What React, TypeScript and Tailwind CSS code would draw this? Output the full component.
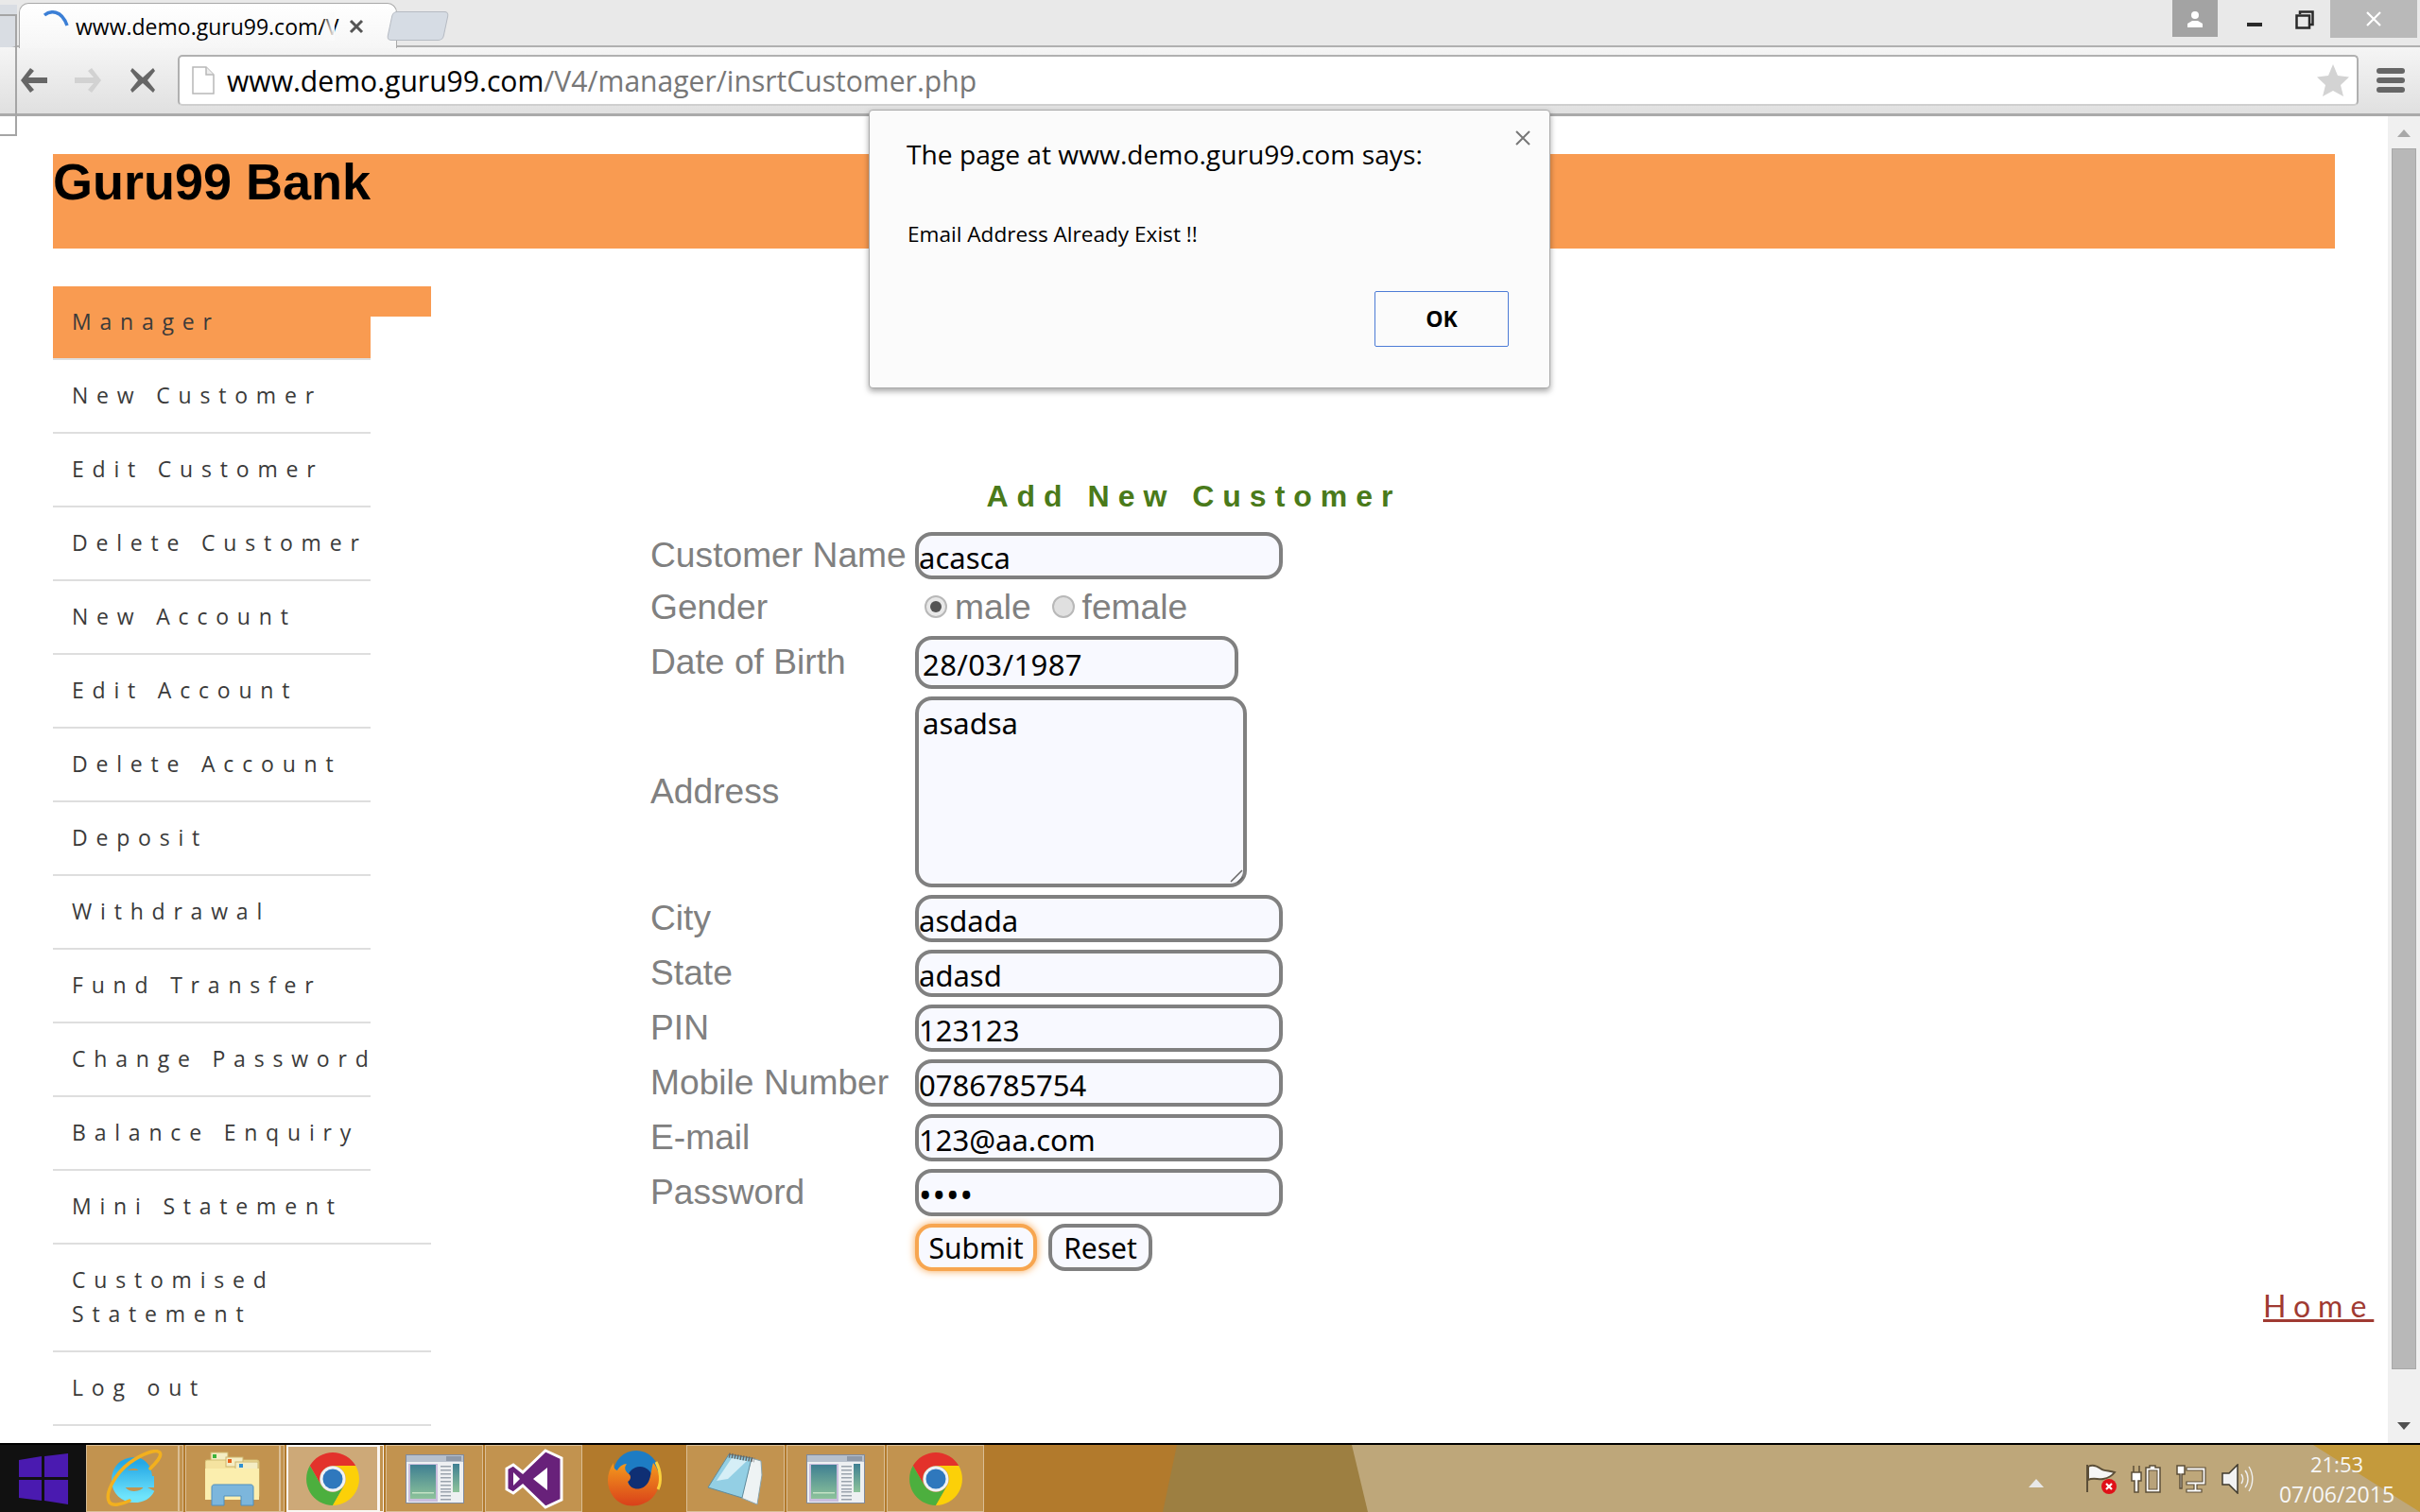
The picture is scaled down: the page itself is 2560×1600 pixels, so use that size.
import { ReactNode } from "react";

const menuItems = [
  "New Customer",
  "Edit Customer",
  "Delete Customer",
  "New Account",
  "Edit Account",
  "Delete Account",
  "Deposit",
  "Withdrawal",
  "Fund Transfer",
  "Change Password",
  "Balance Enquiry",
  "Mini Statement",
];

const inputClass =
  "block h-full w-[389px] rounded-[18px] border-4 border-[#808080] bg-[#f8f9ff] pt-[4px] font-['Noto_Sans',sans-serif] text-[31px] leading-[40px] text-black outline-none";

function Row({ label, height, children }: { label?: string; height: string; children: ReactNode }) {
  return (
    <div className={`flex items-center ${height}`}>
      <div className="mb-[2px] w-[280px] shrink-0 text-[37.2px] leading-[44px] text-[#808080]">{label}</div>
      {children}
    </div>
  );
}

function ChromeIcon() {
  return (
    <svg width="60" height="60" viewBox="0 0 60 60">
      <path d="M5.8 16A28 28 0 0 1 54.2 16L30 16A14 14 0 0 0 17.9 37Z" fill="#e3322b" />
      <path d="M5.8 16L17.9 37A14 14 0 0 0 42.1 37L30 58A28 28 0 0 1 5.8 16Z" fill="#4caf3e" />
      <path d="M54.2 16A28 28 0 0 1 30 58L42.1 37A14 14 0 0 0 30 16Z" fill="#fcd008" />
      <circle cx="30" cy="30" r="13.5" fill="#eef2f6" />
      <circle cx="30" cy="30" r="10.5" fill="#2f78bd" />
    </svg>
  );
}

function AppWindowIcon() {
  return (
    <svg width="62" height="52" viewBox="0 0 62 52">
      <defs>
        <linearGradient id="panel" x1="0" y1="0" x2="0" y2="1">
          <stop offset="0" stopColor="#3f7f92" />
          <stop offset="1" stopColor="#8dc39a" />
        </linearGradient>
      </defs>
      <rect x="0.5" y="0.5" width="61" height="51" fill="#eef0f2" stroke="#7f8a9c" />
      <rect x="1" y="1" width="60" height="7" fill="#b7c0cc" />
      <rect x="43" y="2" width="16" height="5" fill="#8f99a8" />
      <rect x="3" y="10" width="31" height="40" fill="#c9bedd" />
      <rect x="5" y="11" width="27" height="36" fill="url(#panel)" />
      <rect x="7" y="40" width="23" height="1.5" fill="#c5e3c5" />
      {[12, 16, 20, 24, 28, 32, 36, 39, 43, 47].map((y) => (
        <rect key={y} x="37" y={y} width="11" height="1.5" fill="#9aa3ad" />
      ))}
      <rect x="50" y="10" width="7" height="30" fill="url(#panel)" />
    </svg>
  );
}

function IeIcon() {
  return (
    <svg width="66" height="62" viewBox="0 0 66 62">
      <defs>
        <linearGradient id="ie" x1="0" y1="0" x2="0" y2="1">
          <stop offset="0" stopColor="#25a8e6" />
          <stop offset="1" stopColor="#6fe4fb" />
        </linearGradient>
      </defs>
      <path d="M56 34H20M20 28H48C47 18 41 14 35 14C25 14 17 21 17 32C17 43 25 50 35 50C42 50 48 47 51 41" fill="none" stroke="url(#ie)" strokeWidth="12" />
      <path d="M9 56C3 48 14 26 30 14C44 4 58 -1 62 3C65 7 58 14 52 20" fill="none" stroke="#f2b01e" strokeWidth="3.5" strokeLinecap="round" />
      <path d="M9 56C12 60 22 58 30 54" fill="none" stroke="#f2b01e" strokeWidth="3.5" strokeLinecap="round" />
    </svg>
  );
}

function FolderIcon() {
  return (
    <svg width="58" height="58" viewBox="0 0 58 58">
      <rect x="6" y="1" width="18" height="10" fill="#f4edc4" stroke="#cdb56d" />
      <rect x="8" y="3" width="4" height="4" fill="#3bb33b" />
      <rect x="0" y="9" width="57" height="40" rx="2" fill="#f5e3a0" stroke="#d2bd74" />
      <rect x="22" y="6" width="18" height="10" fill="#f4edc4" stroke="#cdb56d" />
      <rect x="24" y="8" width="4" height="4" fill="#e8621d" />
      <rect x="32" y="11" width="24" height="10" fill="#f4edc4" stroke="#cdb56d" />
      <rect x="36" y="13" width="4" height="4" fill="#2f8fd1" />
      <rect x="0" y="18" width="57" height="33" fill="#fbeeae" />
      <path d="M7 57V38C7 36 8 35 10 35H48C50 35 51 36 51 38V57H38V47H20V57Z" fill="#7cb6dc" stroke="#4e8fbe" />
    </svg>
  );
}

function VsIcon() {
  return (
    <svg width="62" height="64" viewBox="0 0 62 64">
      <path d="M43 2L60 10V54L43 62L19 39L9 47L2 43V21L9 17L19 25Z" fill="#68217a" stroke="#fff" strokeWidth="3" />
      <path d="M9 25V39L16 32Z" fill="#fff" />
      <path d="M30 32L45 20V44Z" fill="#fff" />
    </svg>
  );
}

function FirefoxIcon() {
  return (
    <svg width="60" height="62" viewBox="0 0 60 62">
      <defs>
        <linearGradient id="ffo" x1="0" y1="0" x2="0" y2="1">
          <stop offset="0" stopColor="#f39a1d" />
          <stop offset="1" stopColor="#d9401a" />
        </linearGradient>
      </defs>
      <circle cx="32" cy="25" r="24" fill="#1d7cc4" />
      <circle cx="36" cy="31" r="13" fill="#0f2f74" />
      <path d="M50 14C60 26 58 42 49 51C38 62 18 63 8 50C-1 38 1 24 8 14C8 19 9 21 12 22C14 18 18 15 22 15C19 19 20 22 23 25C27 27 27 31 23 34C26 44 40 44 45 34C48 28 48 20 50 14Z" fill="url(#ffo)" />
      <path d="M53 13C58 22 59 34 55 42" fill="none" stroke="#fbd13b" strokeWidth="3" />
    </svg>
  );
}

function NotepadIcon() {
  return (
    <svg width="60" height="56" viewBox="0 0 60 56">
      <path d="M47 6L57 9L58 24L53 55L36 48Z" fill="#eef3f4" stroke="#8aa5ae" />
      <path d="M23 2L47 6L37 48L1 37Z" fill="#93cfe4" stroke="#5f8b9c" />
      <path d="M26 6L42 9L22 28L10 30Z" fill="#d5eef6" />
      <path d="M23 3L50 8" stroke="#666" strokeWidth="5" strokeDasharray="1.5 1.5" />
    </svg>
  );
}

function TaskButton({ children, width, active, stacked }: { children: ReactNode; width: string; active?: boolean; stacked?: boolean }) {
  return (
    <div className={`flex h-[71px] shrink-0 ${width}`}>
      <div
        className={`flex h-full flex-1 items-center justify-center border ${
          active ? "border-2 border-white/90 bg-[#cda978]" : "border-white/40 bg-[#c2934f]"
        }`}
      >
        {children}
      </div>
      {stacked && <div className={`h-full w-[5px] border ${active ? "border-white/90" : "border-white/40"} bg-[#c2934f]`} />}
    </div>
  );
}

export default function App() {
  return (
    <div className="relative flex h-[1600px] w-[2560px] flex-col overflow-hidden bg-white font-['Liberation_Sans',sans-serif]">
      {/* Browser chrome */}
      <div className="relative h-[50px] shrink-0 border-b-2 border-[#b0b0b0] bg-[#e9e9e9]">
        <div className="absolute left-0 top-[5px] h-[45px] w-[18px] rounded-br-md bg-[#d9dde3]" />
        <div className="absolute left-[20px] top-[3px] flex h-[48px] w-[400px] items-center rounded-t-[10px] border border-b-0 border-[#a9a9a9] bg-gradient-to-b from-white to-[#f6f6f6] pl-[24px]">
          <svg width="28" height="18" viewBox="0 0 28 18" className="mb-[16px] shrink-0">
            <path d="M2 5C8 0 20 -1 26 16" fill="none" stroke="#3b7fd6" strokeWidth="3.5" />
          </svg>
          <span className="relative ml-[7px] w-[274px] whitespace-nowrap font-['Open_Sans',sans-serif] text-[23px] leading-[30px] text-black">
            www.demo.guru99.com/V
            <span className="absolute right-0 top-0 h-full w-[14px] bg-gradient-to-r from-transparent to-[#fbfbfb]" />
          </span>
          <svg width="16" height="16" viewBox="0 0 16 16" className="ml-[15px]">
            <path d="M2 2L14 14M14 2L2 14" stroke="#555" strokeWidth="3" />
          </svg>
        </div>
        <div className="absolute left-[412px] top-[12px] h-[31px] w-[60px] -skew-x-12 rounded-[5px] border border-[#b5bac2] bg-[#d6dce4]" />
        <div className="absolute right-[214px] top-0 flex h-[39px] w-[48px] items-center justify-center bg-[#a3a3a3]">
          <svg width="18" height="20" viewBox="0 0 18 20">
            <circle cx="9" cy="6" r="4" fill="#fff" />
            <path d="M1 19V15L6 12H12L17 15V19Z" fill="#fff" />
          </svg>
        </div>
        <div className="absolute left-[2377px] top-[24px] h-[4px] w-[16px] bg-[#2a2a2a]" />
        <svg width="20" height="20" viewBox="0 0 20 20" className="absolute left-[2428px] top-[11px]">
          <path d="M5 4V1.5H18.5V15H15M1.5 5.5H15V18.5H1.5Z" fill="none" stroke="#2a2a2a" strokeWidth="2.5" />
        </svg>
        <div className="absolute left-[2465px] top-0 flex h-[40px] w-[92px] items-center justify-center bg-[#b9b9b9]">
          <svg width="16" height="16" viewBox="0 0 16 16">
            <path d="M1 1L15 15M15 1L1 15" stroke="#fff" strokeWidth="2.2" />
          </svg>
        </div>
      </div>
      <div className="flex h-[73px] shrink-0 items-center border-b-[3px] border-[#aaaaaa] bg-gradient-to-b from-[#f5f5f5] to-[#e0e0e0]">
        <svg width="34" height="30" viewBox="0 0 34 30" className="ml-[19px] shrink-0">
          <path d="M13 2L3 15L13 28L17 25L11 18H31V12H11L17 5Z" fill="#666" />
        </svg>
        <svg width="34" height="30" viewBox="0 0 34 30" className="ml-[23px] shrink-0">
          <path d="M21 2L31 15L21 28L17 25L23 18H3V12H23L17 5Z" fill="#d2d2d2" />
        </svg>
        <svg width="30" height="30" viewBox="0 0 30 30" className="ml-[26px] shrink-0">
          <path d="M4 2L15 12L26 2L28 5L20 15L28 25L26 28L15 18L4 28L2 25L10 15L2 5Z" fill="#666" />
        </svg>
        <div className="ml-[22px] flex h-[54px] w-[2307px] items-center rounded-[5px] border-2 border-[#b0b0b0] border-b-[#cfcfcf] bg-white pl-[13px]">
          <svg width="24" height="30" viewBox="0 0 24 30" className="shrink-0">
            <path d="M1 1H15L23 9V29H1Z" fill="#fff" stroke="#b8b8b8" strokeWidth="1.5" />
            <path d="M15 1V9H23" fill="#eee" stroke="#b8b8b8" strokeWidth="1.5" />
          </svg>
          <span className="ml-[13px] mt-[2px] whitespace-nowrap font-['Open_Sans',sans-serif] text-[30.1px] leading-[40px] text-[#777]">
            <span className="text-black">www.demo.guru99.com</span>/V4/manager/insrtCustomer.php
          </span>
          <svg width="36" height="36" viewBox="0 0 36 36" className="ml-auto mr-[7px] shrink-0">
            <path d="M18 1L23 13L35 14.5L26 23L29 35L18 29L7 35L10 23L1 14.5L13 13Z" fill="#d3d3d3" />
          </svg>
        </div>
        <div className="ml-[19px] flex w-[30px] flex-col gap-[4px]">
          <div className="h-[6px] rounded-[3px] bg-[#666]" />
          <div className="h-[6px] rounded-[3px] bg-[#666]" />
          <div className="h-[6px] rounded-[3px] bg-[#666]" />
        </div>
      </div>
      <div className="absolute left-0 top-[15px] h-[129px] w-[18px] border-y-2 border-r-2 border-[#a5a5a5]" />

      {/* Page */}
      <div className="flex min-h-0 flex-1">
        <div className="min-w-0 flex-1 pl-[56px] pt-[40px]">
          <div className="h-[100px] w-[2414px] bg-[#f99b51]">
            <h1 className="text-[54px] font-bold leading-[58px] text-black">Guru99 Bank</h1>
          </div>
          <div className="mt-[40px] flex">
            <ul className="w-[400px] shrink-0 font-['Open_Sans',sans-serif] text-[23px] leading-[36px] tracking-[8.8px] text-[#3a3a3a]">
              <li className="flex items-start">
                <div className="flex h-[76px] w-[336px] items-center bg-[#f99b51] pb-[2px] pl-[20px]">Manager</div>
                <div className="h-[32px] w-[64px] bg-[#f99b51]" />
              </li>
              {menuItems.map((item) => (
                <li key={item} className="flex h-[78px] w-[336px] items-center whitespace-nowrap border-t-2 border-[#dedede] pb-[2px] pl-[20px]">
                  {item}
                </li>
              ))}
              <li className="w-[400px] border-y-2 border-[#dedede] pb-[21px] pl-[20px] pt-[19px]">
                Customised
                <br />
                Statement
              </li>
              <li className="flex h-[78px] w-[400px] items-center border-b-2 border-[#dedede] pb-[2px] pl-[20px]">Log out</li>
            </ul>
            <div className="ml-[232px] w-[1144px] shrink-0 pt-[200px]">
              <h2 className="pl-[6px] text-center text-[32px] font-bold leading-[44px] tracking-[9px] text-[#4a7a1a]">Add New Customer</h2>
              <div className="mt-[16px] flex flex-col gap-2">
                <Row label="Customer Name" height="h-[50px]">
                  <input readOnly value="acasca" className={inputClass} />
                </Row>
                <Row label="Gender" height="h-[44px]">
                  <div className="mb-[2px] flex items-center pl-[10px] text-[37.2px] leading-[44px] text-[#808080]">
                    <span className="flex h-[24px] w-[24px] items-center justify-center rounded-full border-2 border-[#b8b8b8] bg-[#e8e8e8]">
                      <span className="h-[12px] w-[12px] rounded-full bg-[#555]" />
                    </span>
                    <span className="ml-[8px]">male</span>
                    <span className="ml-[22px] h-[24px] w-[24px] rounded-full border-2 border-[#b8b8b8] bg-[#e0e0e0]" />
                    <span className="ml-[8px]">female</span>
                  </div>
                </Row>
                <Row label="Date of Birth" height="h-[56px]">
                  <input readOnly value="28/03/1987" className={`${inputClass} !w-[342px] pl-[4px] tracking-[0.4px]`} />
                </Row>
                <Row label="Address" height="h-[202px]">
                  <div className="relative h-full w-[351px]">
                    <textarea readOnly value="asadsa" className="block h-full w-full resize-none rounded-[18px] border-4 border-[#808080] bg-[#f8f9ff] pl-[4px] pt-[4px] font-['Noto_Sans',sans-serif] text-[31px] leading-[40px] text-black outline-none" />
                    <svg width="16" height="16" viewBox="0 0 16 16" className="absolute bottom-[4px] right-[3px]">
                      <path d="M2 14L14 2M9 15L15 9" stroke="#666" strokeWidth="1.5" />
                    </svg>
                  </div>
                </Row>
                <Row label="City" height="h-[50px]">
                  <input readOnly value="asdada" className={inputClass} />
                </Row>
                <Row label="State" height="h-[50px]">
                  <input readOnly value="adasd" className={inputClass} />
                </Row>
                <Row label="PIN" height="h-[50px]">
                  <input readOnly value="123123" className={inputClass} />
                </Row>
                <Row label="Mobile Number" height="h-[50px]">
                  <input readOnly value="0786785754" className={inputClass} />
                </Row>
                <Row label="E-mail" height="h-[50px]">
                  <input readOnly value="123@aa.com" className={inputClass} />
                </Row>
                <Row label="Password" height="h-[50px]">
                  <input readOnly type="password" value="abcd" className={`${inputClass} !text-[36px] tracking-[1px]`} />
                </Row>
                <Row height="h-[50px]">
                  <div className="flex h-full gap-[12px] font-['Noto_Sans',sans-serif] text-[30px] text-black">
                    <button className="h-full w-[129px] rounded-[18px] border-4 border-[#f7a650] bg-[#f8f9ff] pt-[2px] leading-[38px] shadow-[0_0_8px_#f7a650]">Submit</button>
                    <button className="h-full w-[110px] rounded-[18px] border-4 border-[#808080] bg-[#f8f9ff] pt-[2px] leading-[38px]">Reset</button>
                  </div>
                </Row>
              </div>
            </div>
            <a className="ml-[562px] mt-[1059px] h-[40px] self-start whitespace-nowrap font-['Lato',sans-serif] text-[32px] leading-[40px] tracking-[0.25em] text-[#a03a32] underline">
              Home
            </a>
          </div>
        </div>

        {/* Scrollbar */}
        <div className="flex w-[34px] shrink-0 flex-col items-center bg-[#f0f0f0] pt-[14px]">
          <div className="h-0 w-0 border-x-[7px] border-b-[8px] border-x-transparent border-b-[#a8a8a8]" />
          <div className="mt-[12px] h-[1292px] w-[26px] border border-[#a8a8a8] bg-[#b8b8b8]" />
          <div className="mt-[56px] h-0 w-0 border-x-[7px] border-t-[8px] border-x-transparent border-t-[#505050]" />
        </div>
      </div>

      {/* Taskbar */}
      <div className="relative flex h-[73px] shrink-0 items-center border-t-2 border-black bg-[#bea77a]">
        {/* wallpaper showing through the taskbar */}
        <div className="absolute inset-y-0 left-0 w-[1447px] bg-[#9d7f41] [clip-path:polygon(0_0,1430px_0,100%_100%,0_100%)]" />
        <div className="absolute inset-y-0 left-0 w-[1245px] bg-[#b27a2c] [clip-path:polygon(0_0,100%_0,1230px_100%,0_100%)]" />
        <div className="absolute inset-y-0 right-0 w-[113px] bg-[#c49a3c] [clip-path:polygon(0_0,100%_0,100%_100%)]" />
        <div className="relative flex h-full w-[91px] shrink-0 items-center justify-center bg-[#111]">
          <svg width="52" height="54" viewBox="0 0 52 54">
            <path d="M0 7L24 3V25H0ZM27 3L52 0V25H27ZM0 28H24V50L0 47ZM27 28H52V54L27 50Z" fill="#4a1ab0" />
          </svg>
        </div>
        <div className="relative flex items-center gap-[2px]">
          <TaskButton width="w-[103px]" stacked><IeIcon /></TaskButton>
          <TaskButton width="w-[105px]" stacked><FolderIcon /></TaskButton>
          <TaskButton width="w-[103px]" active stacked><ChromeIcon /></TaskButton>
          <TaskButton width="w-[103px]"><AppWindowIcon /></TaskButton>
          <TaskButton width="w-[103px]"><VsIcon /></TaskButton>
          <div className="flex h-[71px] w-[106px] shrink-0 items-center justify-center"><FirefoxIcon /></div>
          <TaskButton width="w-[104px]"><NotepadIcon /></TaskButton>
          <TaskButton width="w-[104px]"><AppWindowIcon /></TaskButton>
          <TaskButton width="w-[103px]"><ChromeIcon /></TaskButton>
        </div>
        <div className="relative ml-auto flex items-center">
          <div className="mt-[10px] h-0 w-0 border-x-[8px] border-b-[9px] border-x-transparent border-b-[#e8e8e8]" />
          <svg width="34" height="32" viewBox="0 0 34 32" className="ml-[44px]">
            <path d="M2 1V30M3 3C8 0 12 2 16 5C20 8 25 7 31 9C28 13 24 15 19 16C14 17 8 14 3 17Z" fill="#f6f6f6" stroke="#5c4f38" strokeWidth="2" />
            <circle cx="25" cy="24" r="8" fill="#e01018" />
            <path d="M22 21L28 27M28 21L22 27" stroke="#fff" strokeWidth="2.2" />
          </svg>
          <svg width="32" height="32" viewBox="0 0 32 32" className="ml-[14px]">
            <path d="M3 2V9M9 2V9M1 9H11V18H8V30H4V18H1Z" fill="#fff" stroke="#5c4f38" strokeWidth="1.5" />
            <path d="M16 4H20V2H26V4H31V30H16Z" fill="#fff" stroke="#5c4f38" strokeWidth="1.5" />
            <rect x="19" y="7" width="9" height="20" fill="#b8a27a" stroke="#5c4f38" />
          </svg>
          <svg width="32" height="32" viewBox="0 0 32 32" className="ml-[16px]">
            <path d="M1 2H9V11H6V26H4V11H1Z" fill="#fff" stroke="#5c4f38" strokeWidth="1.5" />
            <path d="M11 4H31V22H22V27H27V30H11V27H19V22H11V19H28V7H11Z" fill="#fff" stroke="#5c4f38" strokeWidth="1.2" />
          </svg>
          <svg width="34" height="32" viewBox="0 0 34 32" className="ml-[16px]">
            <path d="M1 10H8L17 1V31L8 22H1Z" fill="#f2f2f2" stroke="#3f3a2e" strokeWidth="1.5" />
            <path d="M21 11C23 14 23 18 21 21M25 7C29 12 29 20 25 25M29 3C34 11 34 21 29 29" fill="none" stroke="#efefef" strokeWidth="1.4" />
          </svg>
          <div className="ml-[27px] mr-[27px] flex w-[122px] flex-col items-center font-['Open_Sans',sans-serif] text-[23px] leading-[32px] text-[#f6f6f6]">
            <span className="text-[22px]">21:53</span>
            <span>07/06/2015</span>
          </div>
        </div>
      </div>

      {/* Alert dialog */}
      <div className="absolute left-[919px] top-[116px] h-[295px] w-[721px] rounded-[4px] border border-[#aaaaaa] bg-[#fbfbfb] font-['Open_Sans',sans-serif] shadow-[0_3px_6px_rgba(0,0,0,0.35)]">
        <svg width="16" height="16" viewBox="0 0 16 16" className="absolute right-[20px] top-[21px]">
          <path d="M1 1L15 15M15 1L1 15" stroke="#777" strokeWidth="2" />
        </svg>
        <p className="pl-[39px] pt-[26px] text-[28.2px] leading-[40px] text-black">The page at www.demo.guru99.com says:</p>
        <p className="mt-[50px] pl-[40px] text-[22.6px] leading-[30px] text-black">Email Address Already Exist !!</p>
        <button className="absolute left-[534px] top-[191px] h-[59px] w-[142px] rounded-[2px] border border-[#4d7cd6] bg-[#fbfbfb] text-[23px] font-bold text-black">OK</button>
      </div>
    </div>
  );
}
